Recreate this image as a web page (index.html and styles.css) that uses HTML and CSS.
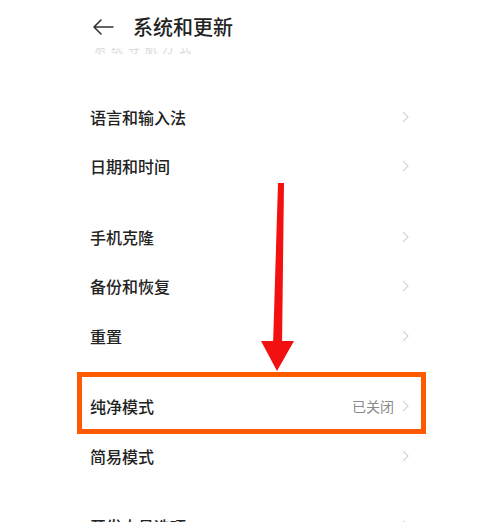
FILE: index.html
```html
<!DOCTYPE html>
<html lang="zh-CN">
<head>
<meta charset="utf-8">
<link rel="stylesheet" href="styles.css">
</head>
<body>
<div class="page">
  <div class="header">
    <svg class="back" width="22" height="16" viewBox="0 0 22 16"><path d="M9 1 L2 8 L9 15 M2 8 H21" fill="none" stroke="#333" stroke-width="1.6" stroke-linecap="round" stroke-linejoin="round"/></svg>
    <span class="title">系统和更新</span>
  </div>
  <div class="ghost"><span>系统导航方式</span></div>

  <div class="list">
    <div class="group">
      <div class="row"><span class="label">语言和输入法</span><span class="right"><svg class="chev" viewBox="0 0 7 12"><path d="M1 1 L6 6 L1 11" /></svg></span></div>
      <div class="row"><span class="label">日期和时间</span><span class="right"><svg class="chev" viewBox="0 0 7 12"><path d="M1 1 L6 6 L1 11" /></svg></span></div>
    </div>
    <div class="group">
      <div class="row"><span class="label">手机克隆</span><span class="right"><svg class="chev" viewBox="0 0 7 12"><path d="M1 1 L6 6 L1 11" /></svg></span></div>
      <div class="row"><span class="label">备份和恢复</span><span class="right"><svg class="chev" viewBox="0 0 7 12"><path d="M1 1 L6 6 L1 11" /></svg></span></div>
      <div class="row"><span class="label">重置</span><span class="right"><svg class="chev" viewBox="0 0 7 12"><path d="M1 1 L6 6 L1 11" /></svg></span></div>
    </div>
    <div class="group">
      <div class="row"><span class="label">纯净模式</span><span class="right"><span class="value">已关闭</span><svg class="chev" viewBox="0 0 7 12"><path d="M1 1 L6 6 L1 11" /></svg></span></div>
      <div class="row"><span class="label">简易模式</span><span class="right"><svg class="chev" viewBox="0 0 7 12"><path d="M1 1 L6 6 L1 11" /></svg></span></div>
    </div>
    <div class="group">
      <div class="row"><span class="label">开发人员选项</span><span class="right"><svg class="chev" viewBox="0 0 7 12"><path d="M1 1 L6 6 L1 11" /></svg></span></div>
    </div>
  </div>

  <div class="highlight"></div>
  <svg class="arrow" width="500" height="522" viewBox="0 0 500 522">
    <polygon points="278,183 284,183 282,346 273,346" fill="#f21010"/>
    <polygon points="261,341 294,341 277,371" fill="#f21010"/>
  </svg>
</div>
</body>
</html>
```

FILE: styles.css
```css
* { box-sizing: border-box; }
html, body {
  margin: 0;
  padding: 0;
  background: #fff;
}
.page {
  position: relative;
  width: 500px;
  height: 522px;
  overflow: hidden;
  font-family: "Noto Sans CJK SC", "Noto Sans", sans-serif;
  color: #222;
}
.header {
  height: 48px;
  padding: 6px 0 0 92px;
  display: flex;
  align-items: center;
}
.back {
  display: block;
}
.title {
  margin-left: 19px;
  font-size: 20px;
  font-weight: 500;
  color: #222;
  line-height: 1;
}
.ghost {
  height: 6px;
  overflow: hidden;
  padding-left: 94px;
  color: #d9d9d9;
  font-size: 12px;
  letter-spacing: 5px;
  line-height: 1;
}
.ghost span {
  display: block;
  margin-top: -6px;
}
.list {
  margin-top: 39px;
  display: flex;
  flex-direction: column;
  gap: 21px;
}
.row {
  height: 49.5px;
  display: flex;
  align-items: center;
  justify-content: space-between;
  padding: 0 91px 2px 90px;
}
.label {
  font-size: 16px;
  font-weight: 500;
  color: #222;
  line-height: 1;
}
.right {
  display: flex;
  align-items: center;
  gap: 8px;
}
.value {
  font-size: 14px;
  color: #8a8a8a;
  line-height: 1;
}
.chev {
  width: 7px;
  height: 12px;
  fill: none;
  stroke: #d6d6d6;
  stroke-width: 1.3;
}
.highlight {
  position: absolute;
  left: 77px;
  top: 372px;
  width: 349px;
  height: 62px;
  border: 5px solid #ff5a00;
}
.arrow {
  position: absolute;
  left: 0;
  top: 0;
}
```
